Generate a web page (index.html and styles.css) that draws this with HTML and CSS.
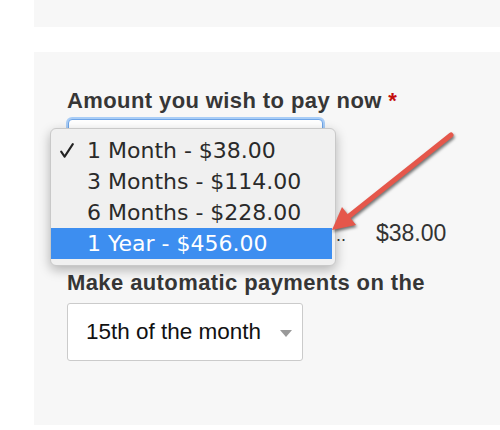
FILE: index.html
```html
<!DOCTYPE html>
<html lang="en">
<head>
<meta charset="utf-8">
<title>Payment options</title>
<link rel="stylesheet" href="styles.css">
</head>
<body>
<div class="page">
  <div class="top-panel"></div>
  <section class="panel">
    <div class="field-label">Amount you wish to pay now <span class="req">*</span></div>
    <div class="select focused"></div>
    <div class="total-row">
      <span class="total-label">Due today...</span>
      <span class="total-amount">$38.00</span>
    </div>
    <div class="field-label second">Make automatic payments on the</div>
    <div class="select day">
      <span class="select-text">15th of the month</span>
      <span class="caret"></span>
    </div>
    <ul class="menu">
      <li class="option"><span class="check"><svg width="14" height="15" viewBox="0 0 14 15"><path d="M1.2 8.6 L4.6 13.6 L12.8 1.2" fill="none" stroke="#222" stroke-width="2.1" stroke-linecap="round" stroke-linejoin="round"/></svg></span>1 Month - $38.00</li>
      <li class="option"><span class="check"></span>3 Months - $114.00</li>
      <li class="option"><span class="check"></span>6 Months - $228.00</li>
      <li class="option active"><span class="check"></span>1 Year - $456.00</li>
    </ul>
  </section>
  <svg class="annotation" width="500" height="430" viewBox="0 0 500 430">
    <g class="arrow">
      <line x1="451" y1="135" x2="348" y2="217" stroke="#e5574b" stroke-width="5" stroke-linecap="round"/>
      <polygon points="332,230 356,225 342,207" fill="#e5574b"/>
    </g>
  </svg>
</div>
</body>
</html>
```
FILE: styles.css
```css
html, body {
  margin: 0;
  padding: 0;
  background: #ffffff;
}

body {
  font-family: "Liberation Sans", Arial, sans-serif;
  color: #383838;
}

.page {
  position: relative;
  width: 500px;
  height: 430px;
  padding-left: 34px;
  box-sizing: border-box;
}

.top-panel {
  height: 27px;
  background: #f7f7f7;
}

.panel {
  position: relative;
  margin-top: 25px;
  height: 373px;
  background: #f7f7f7;
  padding: 36px 0 0 33px;
  box-sizing: border-box;
}

.field-label {
  font-size: 22px;
  line-height: 26px;
  font-weight: bold;
  letter-spacing: 0.4px;
  color: #363636;
}

.req {
  color: #c40d0d;
}

.select {
  box-sizing: border-box;
  background: #ffffff;
  border-radius: 3px;
}

.focused {
  margin-top: 5px;
  margin-left: 1px;
  width: 255px;
  height: 58px;
  border: 1px solid #6ea5e8;
  box-shadow: 0 0 0 2px #a9cdf6;
  border-radius: 4px;
}

.total-row {
  display: flex;
  align-items: baseline;
  gap: 30px;
  margin-top: 42px;
  height: 28px;
  line-height: 28px;
}

.total-label {
  width: 279px;
  font-size: 18px;
  color: #333;
  text-align: right;
  white-space: nowrap;
}

.total-amount {
  font-size: 23px;
  color: #333;
}

.second {
  margin-top: 23px;
}

.day {
  margin-top: 7px;
  width: 236px;
  height: 58px;
  border: 1px solid #cbcbcb;
  display: flex;
  align-items: center;
  justify-content: space-between;
  padding: 0 10px 0 18px;
}

.select-text {
  font-size: 22.5px;
  color: #111;
}

.caret {
  width: 0;
  height: 0;
  border-left: 6px solid transparent;
  border-right: 6px solid transparent;
  border-top: 7px solid #999;
  margin-top: 2px;
}

.menu {
  position: absolute;
  left: 16px;
  top: 76px;
  width: 286px;
  margin: 0;
  padding: 6px 3px 6px 0;
  box-sizing: border-box;
  list-style: none;
  background: #f0f0f0;
  border: 1px solid #c9c9c9;
  border-radius: 6px;
  box-shadow: 0 4px 12px rgba(0, 0, 0, 0.28);
  font-family: "DejaVu Sans", sans-serif;
  font-size: 22px;
  color: #2a2a2a;
}

.option {
  display: flex;
  align-items: center;
  height: 31px;
  line-height: 31px;
  white-space: nowrap;
}

.check {
  display: flex;
  align-items: center;
  width: 36px;
  height: 31px;
  padding-left: 9px;
  box-sizing: border-box;
}

.active {
  background: #3d8ef0;
  color: #ffffff;
}

.annotation {
  position: absolute;
  left: 0;
  top: 0;
  pointer-events: none;
}

.arrow {
  filter: drop-shadow(1px 2px 1.5px rgba(0, 0, 0, 0.55));
}
```
